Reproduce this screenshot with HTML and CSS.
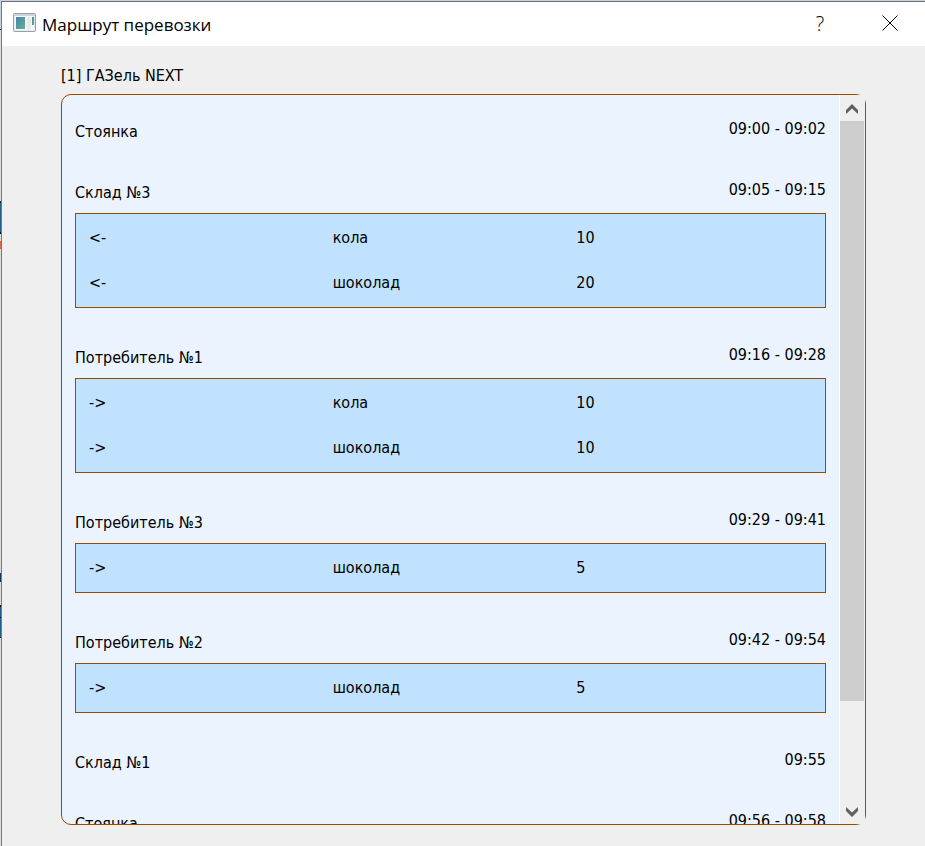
FILE: index.html
```html
<!DOCTYPE html>
<html lang="ru">
<head>
<meta charset="utf-8">
<title>Маршрут перевозки</title>
<link rel="stylesheet" href="styles.css">
</head>
<body>
<main class="window">
  <header class="titlebar">
    <svg class="app-icon" viewBox="0 0 24 20" aria-hidden="true">
      <defs>
        <linearGradient id="pane" x1="0" y1="0" x2="1" y2="1">
          <stop offset="0" stop-color="#4a80b4"/>
          <stop offset="1" stop-color="#5fb58a"/>
        </linearGradient>
      </defs>
      <rect x="0.5" y="0.5" width="22" height="18" rx="1" fill="#e6eaee" stroke="#999fa8"/>
      <rect x="1" y="1" width="21" height="2" fill="#cfd4dc"/>
      <rect x="2" y="3" width="19" height="14" fill="#f6f7f8"/>
      <rect x="3" y="4" width="9" height="12" fill="url(#pane)"/>
      <rect x="14" y="4" width="4" height="12" fill="#e8eaec"/>
      <rect x="19" y="4" width="2" height="8" fill="url(#pane)"/>
    </svg>
    <h1 class="title">Маршрут перевозки</h1>
    <button class="title-button" type="button" aria-label="Справка">?</button>
    <button class="title-button" type="button" aria-label="Закрыть">
      <svg class="close-icon" viewBox="0 0 16 16" aria-hidden="true"><path d="M0.5 0.5L15.5 15.5M15.5 0.5L0.5 15.5"/></svg>
    </button>
  </header>
  <section class="body">
    <h2 class="vehicle">[1] ГАЗель NEXT</h2>
    <div class="panel">
      <div class="stops">
        <article class="stop">
          <header class="stop-head"><h3 class="name">Стоянка</h3><time class="time">09:00 - 09:02</time></header>
        </article>
        <article class="stop">
          <header class="stop-head"><h3 class="name">Склад №3</h3><time class="time">09:05 - 09:15</time></header>
          <div class="cargo"><table>
            <tr><td>&lt;-</td><td>кола</td><td>10</td></tr>
            <tr><td>&lt;-</td><td>шоколад</td><td>20</td></tr>
          </table></div>
        </article>
        <article class="stop">
          <header class="stop-head"><h3 class="name">Потребитель №1</h3><time class="time">09:16 - 09:28</time></header>
          <div class="cargo"><table>
            <tr><td>-&gt;</td><td>кола</td><td>10</td></tr>
            <tr><td>-&gt;</td><td>шоколад</td><td>10</td></tr>
          </table></div>
        </article>
        <article class="stop">
          <header class="stop-head"><h3 class="name">Потребитель №3</h3><time class="time">09:29 - 09:41</time></header>
          <div class="cargo"><table>
            <tr><td>-&gt;</td><td>шоколад</td><td>5</td></tr>
          </table></div>
        </article>
        <article class="stop">
          <header class="stop-head"><h3 class="name">Потребитель №2</h3><time class="time">09:42 - 09:54</time></header>
          <div class="cargo"><table>
            <tr><td>-&gt;</td><td>шоколад</td><td>5</td></tr>
          </table></div>
        </article>
        <article class="stop">
          <header class="stop-head"><h3 class="name">Склад №1</h3><time class="time">09:55</time></header>
        </article>
        <article class="stop">
          <header class="stop-head"><h3 class="name">Стоянка</h3><time class="time">09:56 - 09:58</time></header>
        </article>
      </div>
      <div class="scrollbar">
        <button class="scroll-button" type="button" aria-label="Вверх">
          <svg class="chevron" viewBox="0 0 12 10" aria-hidden="true"><path d="M0 6L6 0L12 6V10L6 4.5L0 10Z"/></svg>
        </button>
        <div class="track"><div class="thumb"></div></div>
        <button class="scroll-button" type="button" aria-label="Вниз">
          <svg class="chevron" viewBox="0 0 12 10" aria-hidden="true"><path d="M0 4L6 10L12 4V0L6 5.5L0 0Z"/></svg>
        </button>
      </div>
    </div>
  </section>
</main>
</body>
</html>
```
FILE: styles.css
```css
* {
  box-sizing: border-box;
}

/* The desktop shows through in a thin strip beside and above the window */
body {
  margin: 0;
  height: 100vh;
  padding: 1px 0 0 1px;
  overflow: hidden;
  color: #000;
  font: 16px/23px "DejaVu Sans Condensed", "Noto Sans", sans-serif;
  background: linear-gradient(#c8d2de 0 29px, #222 29px 30px, #dcdcdc 30px 201px,
    #222 201px 203px, #1f618f 203px 232px, #111 232px 234px, #dcdcdc 234px 241px,
    #e0643c 241px 249px, #dcdcdc 249px 573px, #0f3660 573px 582px,
    #dcdcdc 582px 605px, #111 605px 607px, #1f618f 607px 617px,
    #111 617px 618px, #1f618f 618px 637px, #111 637px 638px, #dcdcdc 638px);
}

h1, h2, h3 {
  margin: 0;
  font-weight: 400;
}

button {
  padding: 0;
  border: 0;
  background: none;
  color: inherit;
  font: inherit;
}

.window {
  display: flex;
  flex-direction: column;
  height: 100%;
  border-top: 1px solid #6d7178;
  border-left: 1px solid #77797b;
  background: #efefef;
}

.titlebar {
  display: flex;
  flex: none;
  align-items: center;
  height: 44px;
  padding-left: 11px;
  background: #fff;
  font-family: "Open Sans", "Noto Sans", sans-serif;
}

.app-icon {
  width: 24px;
  height: 20px;
  margin-right: 5px;
  margin-bottom: 2px;
}

.title {
  flex: 1;
  font-size: 17px;
}

.title-button {
  display: flex;
  align-items: center;
  justify-content: center;
  width: 70px;
  height: 44px;
  padding-bottom: 2px;
  font-size: 20px;
  font-weight: 300;
}

.close-icon {
  width: 16px;
  height: 16px;
  fill: none;
  stroke: #000;
}

.body {
  display: flex;
  flex: 1;
  flex-direction: column;
  min-height: 0;
  padding: 18px 59px 21px;
}

.vehicle {
  padding-bottom: 7px;
  font-size: 16px;
}

.panel {
  display: flex;
  flex: 1;
  min-height: 0;
  border: 1px solid #964b00;
  border-radius: 10px;
  background: #ebf3fe;
}

.stops {
  display: flex;
  flex: 1;
  flex-direction: column;
  gap: 38px;
  overflow: hidden;
  padding: 25px 13px 0;
}

.stop {
  flex: none;
}

.stop-head {
  display: flex;
  align-items: flex-start;
  justify-content: space-between;
}

.name {
  font-size: 16px;
}

.time {
  line-height: 17px;
}

.cargo {
  margin-top: 9px;
  padding: 1px 5px 2px 13px;
  border: 1px solid #964b00;
  background: #c0e2ff;
}

.cargo table {
  width: 100%;
  table-layout: fixed;
  border-collapse: collapse;
}

.cargo td {
  height: 45px;
  padding: 0;
}

.scrollbar {
  display: flex;
  flex-direction: column;
  width: 26px;
  border-right: 1px solid #efefef;
  border-left: 1px solid #fff;
  background: #efefef;
}

.scroll-button {
  display: flex;
  flex: none;
  align-items: center;
  justify-content: center;
  height: 26px;
  padding-top: 2px;
}

.chevron {
  width: 12px;
  height: 10px;
  fill: #606060;
}

.track {
  flex: 1;
}

.thumb {
  height: 85.7%;
  background: #cdcdcd;
}
```
